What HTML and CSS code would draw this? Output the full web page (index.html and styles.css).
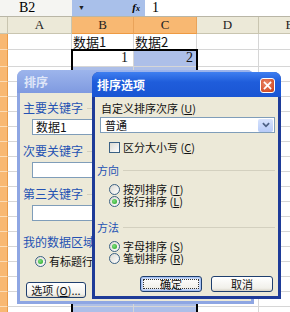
FILE: index.html
```html
<!DOCTYPE html>
<html lang="zh-CN">
<head>
    <meta charset="UTF-8">
    <meta name="viewport" content="width=device-width, initial-scale=1.0">
    <title>排序</title>
    <link rel="stylesheet" href="styles.css">
</head>
<body>
    <div class="sheet">
        <div class="formula-bar">
            <div class="name-box">B2</div>
            <div class="fx-box">
                <span class="drop">&#9660;</span>
                <span class="fx">f<small>x</small></span>
            </div>
            <div class="formula">1</div>
        </div>

        <div class="grid" id="grid">
            <div class="row head">
                <div class="rh corner"></div>
                <div class="ch">A</div>
                <div class="ch on">B</div>
                <div class="ch on">C</div>
                <div class="ch">D</div>
                <div class="ch">E</div>
            </div>
            <div class="row r1">
                <div class="rh"></div>
                <div class="cell"></div>
                <div class="cell">数据1</div>
                <div class="cell">数据2</div>
                <div class="cell"></div>
                <div class="cell"></div>
            </div>
            <div class="row r2">
                <div class="rh"></div>
                <div class="cell"></div>
                <div class="cell num">1</div>
                <div class="cell num sel">2</div>
                <div class="cell"></div>
                <div class="cell"></div>
            </div>
            <!-- rows 3+ are added by the script below -->
        </div>

        <div class="range"></div>

        <!-- the sort dialog (inactive, behind) -->
        <div class="dialog sort">
            <div class="title">排序</div>
            <div class="body">
                <div class="group-label first">主要关键字</div>
                <div class="field">数据1</div>
                <div class="group-label">次要关键字</div>
                <div class="field"></div>
                <div class="group-label">第三关键字</div>
                <div class="field"></div>
                <div class="group-label area">我的数据区域</div>
                <div class="option-row header-row"><span class="radio checked"></span>有标题行 (<u>R</u>)</div>
                <div class="btn-row">
                    <button class="btn">选项 (<u>O</u>)...</button>
                </div>
            </div>
        </div>

        <!-- the sort options dialog (active, on top) -->
        <div class="dialog options">
            <div class="title">
                排序选项
                <span class="close">
                    <svg xmlns="http://www.w3.org/2000/svg" viewBox="0 0 13 13"><path d="M3 3l7 7M10 3l-7 7" stroke="white" stroke-width="2" stroke-linecap="square"/></svg>
                </span>
            </div>
            <div class="body">
                <div class="plain-label">自定义排序次序 (<u>U</u>)</div>
                <div class="select">
                    <span>普通</span>
                    <span class="select-btn">
                        <svg xmlns="http://www.w3.org/2000/svg" viewBox="0 0 9 6"><path d="M1 1l3.5 3.5L8 1" stroke="#4d6185" stroke-width="2" fill="none"/></svg>
                    </span>
                </div>
                <div class="option-row check-row"><span class="check"></span>区分大小写 (<u>C</u>)</div>

                <div class="group-label sec">方向</div>
                <div class="option-row"><span class="radio"></span>按列排序 (<u>T</u>)</div>
                <div class="option-row"><span class="radio checked"></span>按行排序 (<u>L</u>)</div>

                <div class="group-label sec method">方法</div>
                <div class="option-row"><span class="radio checked"></span>字母排序 (<u>S</u>)</div>
                <div class="option-row"><span class="radio"></span>笔划排序 (<u>R</u>)</div>

                <div class="buttons">
                    <button class="btn default">确定</button>
                    <button class="btn">取消</button>
                </div>
            </div>
        </div>
    </div>

    <script>
        const grid = document.getElementById('grid');
        for (let i = 3; i <= 19; i++) {
            const row = document.createElement('div');
            row.classList.add('row');
            row.innerHTML = `
                <div class="rh"></div>
                <div class="cell"></div>
                <div class="cell sel"></div>
                <div class="cell sel"></div>
                <div class="cell"></div>
                <div class="cell"></div>
            `;
            grid.appendChild(row);
        }
    </script>
</body>
</html>
```

FILE: styles.css
```css
* {
    box-sizing: border-box;
}

body {
    margin: 0;
    font-family: "Noto Sans CJK SC", sans-serif;
    background-color: #fff;
}

.sheet {
    position: relative;
    width: 290px;
    height: 312px;
    overflow: hidden;
    background-color: #fff;
}

/* formula bar */
.formula-bar {
    display: flex;
    height: 17px;
    border-bottom: 1px solid #b9b6a6;
    font-family: "Liberation Serif", serif;
    font-size: 14px;
    line-height: 16px;
}

.name-box {
    width: 72px;
    padding-left: 19px;
    background-color: #f5f5f2;
}

.fx-box {
    width: 73px;
    display: flex;
    justify-content: space-between;
    align-items: center;
    padding: 0 5px 0 6px;
    background-color: #a9c0ea;
}

.drop {
    font-size: 7px;
    color: #222;
}

.fx {
    font-style: italic;
    font-weight: bold;
    font-size: 11px;
}

.fx small {
    font-size: 8px;
}

.formula {
    padding-left: 7px;
}

/* sheet grid */
.row {
    display: grid;
    grid-template-columns: 8px 64px 62px 63px 62px 62px;
    height: 15px;
}

.row.head {
    height: 17px;
}

.row.r1 {
    height: 16px;
}

.row.r2 {
    height: 17px;
}

.ch {
    background-color: #ece9d8;
    border-right: 1px solid #c9c5b0;
    border-bottom: 1px solid #c9c5b0;
    text-align: center;
    font-family: "Liberation Serif", serif;
    font-size: 13px;
    line-height: 16px;
    color: #222;
}

.ch.on {
    background-color: #f8b872;
    border-bottom-color: #ee9a42;
    border-right-color: #e9a35a;
}

.rh {
    background-color: #f8b872;
    border-right: 1px solid #e99b48;
    border-bottom: 1px solid #fbdcb6;
}

.rh.corner {
    background-color: #ece9d8;
    border-bottom-color: #c9c5b0;
    border-right-color: #c9c5b0;
}

.cell {
    border-right: 1px solid #d6d6d6;
    border-bottom: 1px solid #d6d6d6;
    padding: 0 1px;
    font-size: 13px;
    line-height: 15px;
    white-space: nowrap;
    color: #111;
}

.cell.num {
    text-align: right;
    font-family: "Liberation Serif", serif;
    font-size: 14px;
    padding-right: 5px;
}

.cell.num.sel {
    padding-right: 3px;
}

.cell.sel {
    background-color: #adbfe8;
}

.range {
    position: absolute;
    left: 71px;
    top: 49px;
    width: 127px;
    height: 300px;
    border: 2px solid #000;
}

/* dialogs */
.dialog {
    position: absolute;
    display: flex;
    flex-direction: column;
    padding: 0 3px 3px;
    border-radius: 7px 7px 0 0;
    font-size: 12px;
    line-height: 14px;
    color: #111;
}

.dialog .title {
    position: relative;
    display: flex;
    align-items: center;
    padding-left: 4px;
    font-weight: bold;
    flex-shrink: 0;
}

.dialog .body {
    flex: 1;
    display: flex;
    flex-direction: column;
    background-color: #ece9d8;
}

.sort {
    left: 17px;
    top: 70px;
    width: 237px;
    height: 234px;
    background-color: #8ea6e3;
}

.sort .title {
    height: 23px;
    color: #dfe6f8;
    background: linear-gradient(#9db5ec, #7f9ae0);
    margin: 0 -3px;
    padding-left: 7px;
    border-radius: 7px 7px 0 0;
}

.sort .body {
    padding-left: 3px;
}

.options {
    left: 92px;
    top: 72px;
    width: 189px;
    height: 227px;
    font-size: 11px;
    background-color: #1e3b98;
}

.options .title {
    height: 25px;
    font-size: 12px;
    color: #fff;
    background: linear-gradient(#3f7ff0, #1f5ddb 40%, #1a55d3);
    margin: 0 -3px;
    padding-left: 5px;
    border-radius: 7px 7px 0 0;
}

.close {
    position: absolute;
    right: 6px;
    top: 6px;
    width: 15px;
    height: 15px;
    border: 1px solid #fff;
    border-radius: 3px;
    background: radial-gradient(circle at 40% 35%, #ec8a6a, #d4512c 70%, #b83a18);
    display: flex;
    align-items: center;
    justify-content: center;
}

.close svg {
    width: 11px;
    height: 11px;
}

.group-label {
    display: flex;
    align-items: center;
    color: #2452b3;
    margin-top: 9px;
}

.group-label::after {
    content: "";
    flex: 1;
    margin-left: 4px;
    border-top: 1px solid #d3d0bf;
}

.group-label.first {
    margin-top: 8px;
}

.group-label.area {
    margin-top: 14px;
}

.field {
    width: 150px;
    height: 16px;
    margin: 4px 0 0 9px;
    padding-left: 3px;
    background-color: #fff;
    border: 1px solid #7f9db9;
    font-size: 12px;
    line-height: 14px;
}

.option-row {
    display: flex;
    align-items: center;
    height: 12px;
    padding-left: 13px;
    font-size: 11px;
    line-height: 12px;
    white-space: nowrap;
}

.header-row {
    margin-top: 6px;
    padding-left: 12px;
}

.radio {
    position: relative;
    width: 11px;
    height: 11px;
    margin-right: 3px;
    border-radius: 50%;
    border: 1px solid #3b6184;
    background: linear-gradient(135deg, #dcdad2, #fff);
    flex-shrink: 0;
}

.radio.checked::after {
    content: "";
    position: absolute;
    left: 2px;
    top: 2px;
    width: 5px;
    height: 5px;
    border-radius: 50%;
    background: radial-gradient(circle at 40% 40%, #7ee07e, #21a121);
}

.check {
    width: 11px;
    height: 11px;
    margin-right: 3px;
    border: 1px solid #3b6184;
    background: linear-gradient(135deg, #dcdad2, #fff);
    flex-shrink: 0;
}

.btn-row {
    margin-top: 15px;
    padding-left: 3px;
}

.btn {
    height: 16px;
    padding: 0;
    border: 1px solid #1f3f6e;
    border-radius: 3px;
    background: linear-gradient(#fff, #f1f0ea 80%, #d8d3c6);
    font-family: "Noto Sans CJK SC", sans-serif;
    font-size: 11px;
    line-height: 14px;
    color: #111;
}

.sort .btn {
    width: 60px;
}

.options .body {
    padding: 0 3px 0 2px;
}

.plain-label {
    margin: 4px 0 0 4px;
}

.select {
    display: flex;
    justify-content: space-between;
    align-items: center;
    height: 16px;
    margin: 2px 0 0 3px;
    padding: 0 1px 0 4px;
    background-color: #fff;
    border: 1px solid #7f9db9;
}

.select-btn {
    width: 15px;
    height: 13px;
    border-radius: 2px;
    background: linear-gradient(#d7e3fd, #b7cbf8);
    display: flex;
    align-items: center;
    justify-content: center;
}

.select-btn svg {
    width: 8px;
    height: 6px;
}

.check-row {
    margin-top: 8px;
    padding-left: 10px;
}

.group-label.sec {
    margin-top: 10px;
    margin-bottom: 6px;
}

.group-label.method {
    margin-top: 13px;
}

.options .option-row {
    padding-left: 12px;
}

.buttons {
    display: flex;
    justify-content: flex-end;
    gap: 9px;
    margin-top: auto;
    margin-bottom: 4px;
    padding-right: 2px;
}

.options .btn {
    width: 62px;
}

.btn.default {
    border-color: #1f3f6e;
    box-shadow: inset 0 0 0 1px #a8c2f2, inset 0 0 0 2px #c7d8f8;
    outline: 1px dotted #333;
    outline-offset: -4px;
}
```
